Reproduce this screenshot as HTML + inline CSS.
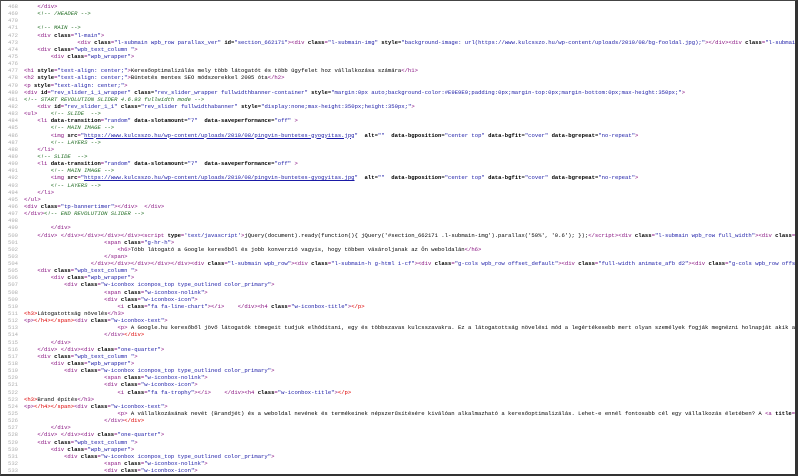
<!DOCTYPE html>
<html><head><meta charset="utf-8">
<style>
html,body{margin:0;padding:0;background:#fff;}
body{width:798px;height:476px;overflow:hidden;position:relative;}
#f{position:absolute;left:0;top:0;border-top:1px solid #444;border-left:1px solid #555;border-bottom:2px solid #333;border-right:3px solid #333;overflow:hidden;box-sizing:border-box;width:798px;height:476px;}
#c{position:absolute;left:0;top:2px;font-family:"Liberation Mono",monospace;font-size:5.57px;line-height:7.15px;color:#000;white-space:nowrap;}
.l{height:7.15px;white-space:pre;overflow:visible;}
.n{display:inline-block;width:17px;text-align:right;color:#b0b0b0;margin-right:6px;}
.t{color:#881280;}
b{font-weight:bold;color:#000;}
.v{color:#1a1aa6;}
i{color:#236e25;font-style:italic;}
.e{color:#d00;}
.u{color:#1a1aa6;text-decoration:underline;}
</style></head><body><div id="f"><div id="c"><div class="l"><span class="n">468</span>    <span class="t">&lt;/div&gt;</span></div><div class="l"><span class="n">469</span>    <i>&lt;!-- /HEADER --&gt;</i></div><div class="l"><span class="n">470</span></div><div class="l"><span class="n">471</span>    <i>&lt;!-- MAIN --&gt;</i></div><div class="l"><span class="n">472</span>    <span class="t">&lt;div <b>class</b>=</span><span class="v">"l-main"</span><span class="t">&gt;</span></div><div class="l"><span class="n">473</span>                <span class="t">&lt;div <b>class</b>=</span><span class="v">"l-submain wpb_row parallax_ver"</span> <b>id</b>=<span class="v">"section_662171"</span><span class="t">&gt;&lt;div <b>class</b>=</span><span class="v">"l-submain-img"</span> <b>style</b>=<span class="v">"background-image: url(https://www.kulcsszo.hu/wp-content/uploads/2010/08/bg-fooldal.jpg);"</span><span class="t">&gt;&lt;/div&gt;&lt;div <b>class</b>=</span><span class="v">"l-submain-h g-html i-cf"</span></div><div class="l"><span class="n">474</span>    <span class="t">&lt;div <b>class</b>=</span><span class="v">"wpb_text_column "</span><span class="t">&gt;</span></div><div class="l"><span class="n">475</span>        <span class="t">&lt;div <b>class</b>=</span><span class="v">"wpb_wrapper"</span><span class="t">&gt;</span></div><div class="l"><span class="n">476</span></div><div class="l"><span class="n">477</span><span class="t">&lt;h1 <b>style</b>=</span><span class="v">"text-align: center;"</span><span class="t">&gt;</span>Keresőoptimalizálás mely több látogatót és több ügyfelet hoz vállalkozása számára<span class="t">&lt;/h1&gt;</span></div><div class="l"><span class="n">478</span><span class="t">&lt;h2 <b>style</b>=</span><span class="v">"text-align: center;"</span><span class="t">&gt;</span>Büntetés mentes SEO módszerekkel 2005 óta<span class="t">&lt;/h2&gt;</span></div><div class="l"><span class="n">479</span><span class="t">&lt;p <b>style</b>=</span><span class="v">"text-align: center;"</span><span class="t">&gt;</span></div><div class="l"><span class="n">480</span><span class="t">&lt;div <b>id</b>=</span><span class="v">"rev_slider_1_1_wrapper"</span> <b>class</b>=<span class="v">"rev_slider_wrapper fullwidthbanner-container"</span> <b>style</b>=<span class="v">"margin:0px auto;background-color:#E9E9E9;padding:0px;margin-top:0px;margin-bottom:0px;max-height:350px;"</span><span class="t">&gt;</span></div><div class="l"><span class="n">481</span><i>&lt;!-- START REVOLUTION SLIDER 4.6.93 fullwidth mode --&gt;</i></div><div class="l"><span class="n">482</span>    <span class="t">&lt;div <b>id</b>=</span><span class="v">"rev_slider_1_1"</span> <b>class</b>=<span class="v">"rev_slider fullwidthabanner"</span> <b>style</b>=<span class="v">"display:none;max-height:350px;height:350px;"</span><span class="t">&gt;</span></div><div class="l"><span class="n">483</span><span class="t">&lt;ul&gt;</span>    <i>&lt;!-- SLIDE  --&gt;</i></div><div class="l"><span class="n">484</span>    <span class="t">&lt;li <b>data-transition</b>=</span><span class="v">"random"</span> <b>data-slotamount</b>=<span class="v">"7"</span>  <b>data-saveperformance</b>=<span class="v">"off"</span> <span class="t">&gt;</span></div><div class="l"><span class="n">485</span>        <i>&lt;!-- MAIN IMAGE --&gt;</i></div><div class="l"><span class="n">486</span>        <span class="t">&lt;img <b>src</b>=</span><span class="v">"<span class="u">https://www.kulcsszo.hu/wp-content/uploads/2010/08/pingvin-buntetes-gyogyitas.jpg</span>"</span>  <b>alt</b>=<span class="v">""</span>  <b>data-bgposition</b>=<span class="v">"center top"</span> <b>data-bgfit</b>=<span class="v">"cover"</span> <b>data-bgrepeat</b>=<span class="v">"no-repeat"</span><span class="t">&gt;</span></div><div class="l"><span class="n">487</span>        <i>&lt;!-- LAYERS --&gt;</i></div><div class="l"><span class="n">488</span>    <span class="t">&lt;/li&gt;</span></div><div class="l"><span class="n">489</span>    <i>&lt;!-- SLIDE  --&gt;</i></div><div class="l"><span class="n">490</span>    <span class="t">&lt;li <b>data-transition</b>=</span><span class="v">"random"</span> <b>data-slotamount</b>=<span class="v">"7"</span>  <b>data-saveperformance</b>=<span class="v">"off"</span> <span class="t">&gt;</span></div><div class="l"><span class="n">491</span>        <i>&lt;!-- MAIN IMAGE --&gt;</i></div><div class="l"><span class="n">492</span>        <span class="t">&lt;img <b>src</b>=</span><span class="v">"<span class="u">https://www.kulcsszo.hu/wp-content/uploads/2010/08/pingvin-buntetes-gyogyitas.jpg</span>"</span>  <b>alt</b>=<span class="v">""</span>  <b>data-bgposition</b>=<span class="v">"center top"</span> <b>data-bgfit</b>=<span class="v">"cover"</span> <b>data-bgrepeat</b>=<span class="v">"no-repeat"</span><span class="t">&gt;</span></div><div class="l"><span class="n">493</span>        <i>&lt;!-- LAYERS --&gt;</i></div><div class="l"><span class="n">494</span>    <span class="t">&lt;/li&gt;</span></div><div class="l"><span class="n">495</span><span class="t">&lt;/ul&gt;</span></div><div class="l"><span class="n">496</span><span class="t">&lt;div <b>class</b>=</span><span class="v">"tp-bannertimer"</span><span class="t">&gt;&lt;/div&gt;</span>  <span class="t">&lt;/div&gt;</span></div><div class="l"><span class="n">497</span><span class="t">&lt;/div&gt;</span><i>&lt;!-- END REVOLUTION SLIDER --&gt;</i></div><div class="l"><span class="n">498</span></div><div class="l"><span class="n">499</span>        <span class="t">&lt;/div&gt;</span></div><div class="l"><span class="n">500</span>    <span class="t">&lt;/div&gt;</span> <span class="t">&lt;/div&gt;&lt;/div&gt;&lt;/div&gt;&lt;/div&gt;&lt;script <b>type</b>=</span><span class="v">'text/javascript'</span><span class="t">&gt;</span>jQuery(document).ready(function(){ jQuery('#section_662171 .l-submain-img').parallax('50%', '0.6'); });<span class="t">&lt;/script&gt;&lt;div <b>class</b>=</span><span class="v">"l-submain wpb_row full_width"</span><span class="t">&gt;&lt;div <b>class</b>=</span><span class="v">"l-submain-h"</span></div><div class="l"><span class="n">501</span>                        <span class="t">&lt;span <b>class</b>=</span><span class="v">"g-hr-h"</span><span class="t">&gt;</span></div><div class="l"><span class="n">502</span>                            <span class="t">&lt;h6&gt;</span>Több látogató a Google keresőből és jobb konverzió vagyis, hogy többen vásároljanak az Ön weboldalán<span class="t">&lt;/h6&gt;</span></div><div class="l"><span class="n">503</span>                        <span class="t">&lt;/span&gt;</span></div><div class="l"><span class="n">504</span>                    <span class="t">&lt;/div&gt;&lt;/div&gt;&lt;/div&gt;&lt;/div&gt;&lt;/div&gt;&lt;div <b>class</b>=</span><span class="v">"l-submain wpb_row"</span><span class="t">&gt;&lt;div <b>class</b>=</span><span class="v">"l-submain-h g-html i-cf"</span><span class="t">&gt;&lt;div <b>class</b>=</span><span class="v">"g-cols wpb_row offset_default"</span><span class="t">&gt;&lt;div <b>class</b>=</span><span class="v">"full-width animate_afb d2"</span><span class="t">&gt;&lt;div <b>class</b>=</span><span class="v">"g-cols wpb_row offset_none"</span></div><div class="l"><span class="n">505</span>    <span class="t">&lt;div <b>class</b>=</span><span class="v">"wpb_text_column "</span><span class="t">&gt;</span></div><div class="l"><span class="n">506</span>        <span class="t">&lt;div <b>class</b>=</span><span class="v">"wpb_wrapper"</span><span class="t">&gt;</span></div><div class="l"><span class="n">507</span>            <span class="t">&lt;div <b>class</b>=</span><span class="v">"w-iconbox iconpos_top type_outlined color_primary"</span><span class="t">&gt;</span></div><div class="l"><span class="n">508</span>                        <span class="t">&lt;span <b>class</b>=</span><span class="v">"w-iconbox-nolink"</span><span class="t">&gt;</span></div><div class="l"><span class="n">509</span>                        <span class="t">&lt;div <b>class</b>=</span><span class="v">"w-iconbox-icon"</span><span class="t">&gt;</span></div><div class="l"><span class="n">510</span>                            <span class="t">&lt;i <b>class</b>=</span><span class="v">"fa fa-line-chart"</span><span class="t">&gt;&lt;/i&gt;</span>    <span class="t">&lt;/div&gt;&lt;h4 <b>class</b>=</span><span class="v">"w-iconbox-title"</span><span class="t">&gt;</span><span class="e">&lt;/p&gt;</span></div><div class="l"><span class="n">511</span><span class="e">&lt;h3&gt;</span>Látogatottság növelés<span class="t">&lt;/h3&gt;</span></div><div class="l"><span class="n">512</span><span class="t">&lt;p&gt;</span><span class="e">&lt;/h4&gt;&lt;/span&gt;</span><span class="t">&lt;div <b>class</b>=</span><span class="v">"w-iconbox-text"</span><span class="t">&gt;</span></div><div class="l"><span class="n">513</span>                            <span class="t">&lt;p&gt;</span> A Google.hu keresőből jövő látogatók tömegeit tudjuk elhódítani, egy és többszavas kulcsszavakra. Ez a látogatottság növelési mód a legértékesebb mert olyan személyek fogják megnézni holnapját akik a</div><div class="l"><span class="n">514</span>                        <span class="t">&lt;/div&gt;</span><span class="e">&lt;/div&gt;</span></div><div class="l"><span class="n">515</span>        <span class="t">&lt;/div&gt;</span></div><div class="l"><span class="n">516</span>    <span class="t">&lt;/div&gt;</span> <span class="t">&lt;/div&gt;&lt;div <b>class</b>=</span><span class="v">"one-quarter"</span><span class="t">&gt;</span></div><div class="l"><span class="n">517</span>    <span class="t">&lt;div <b>class</b>=</span><span class="v">"wpb_text_column "</span><span class="t">&gt;</span></div><div class="l"><span class="n">518</span>        <span class="t">&lt;div <b>class</b>=</span><span class="v">"wpb_wrapper"</span><span class="t">&gt;</span></div><div class="l"><span class="n">519</span>            <span class="t">&lt;div <b>class</b>=</span><span class="v">"w-iconbox iconpos_top type_outlined color_primary"</span><span class="t">&gt;</span></div><div class="l"><span class="n">520</span>                        <span class="t">&lt;span <b>class</b>=</span><span class="v">"w-iconbox-nolink"</span><span class="t">&gt;</span></div><div class="l"><span class="n">521</span>                        <span class="t">&lt;div <b>class</b>=</span><span class="v">"w-iconbox-icon"</span><span class="t">&gt;</span></div><div class="l"><span class="n">522</span>                            <span class="t">&lt;i <b>class</b>=</span><span class="v">"fa fa-trophy"</span><span class="t">&gt;&lt;/i&gt;</span>    <span class="t">&lt;/div&gt;&lt;h4 <b>class</b>=</span><span class="v">"w-iconbox-title"</span><span class="t">&gt;</span><span class="e">&lt;/p&gt;</span></div><div class="l"><span class="n">523</span><span class="e">&lt;h3&gt;</span>Brand építés<span class="t">&lt;/h3&gt;</span></div><div class="l"><span class="n">524</span><span class="t">&lt;p&gt;</span><span class="e">&lt;/h4&gt;&lt;/span&gt;</span><span class="t">&lt;div <b>class</b>=</span><span class="v">"w-iconbox-text"</span><span class="t">&gt;</span></div><div class="l"><span class="n">525</span>                            <span class="t">&lt;p&gt;</span> A vállalkozásának nevét (Brandjét) és a weboldal nevének és termékeinek népszerűsítésére kiválóan alkalmazható a keresőoptimalizálás. Lehet-e ennél fontosabb cél egy vállalkozás életében? A <span class="t">&lt;a <b>title</b>=</span></div><div class="l"><span class="n">526</span>                        <span class="t">&lt;/div&gt;</span><span class="e">&lt;/div&gt;</span></div><div class="l"><span class="n">527</span>        <span class="t">&lt;/div&gt;</span></div><div class="l"><span class="n">528</span>    <span class="t">&lt;/div&gt;</span> <span class="t">&lt;/div&gt;&lt;div <b>class</b>=</span><span class="v">"one-quarter"</span><span class="t">&gt;</span></div><div class="l"><span class="n">529</span>    <span class="t">&lt;div <b>class</b>=</span><span class="v">"wpb_text_column "</span><span class="t">&gt;</span></div><div class="l"><span class="n">530</span>        <span class="t">&lt;div <b>class</b>=</span><span class="v">"wpb_wrapper"</span><span class="t">&gt;</span></div><div class="l"><span class="n">531</span>            <span class="t">&lt;div <b>class</b>=</span><span class="v">"w-iconbox iconpos_top type_outlined color_primary"</span><span class="t">&gt;</span></div><div class="l"><span class="n">532</span>                        <span class="t">&lt;span <b>class</b>=</span><span class="v">"w-iconbox-nolink"</span><span class="t">&gt;</span></div><div class="l"><span class="n">533</span>                        <span class="t">&lt;div <b>class</b>=</span><span class="v">"w-iconbox-icon"</span><span class="t">&gt;</span></div></div></div></body></html>
